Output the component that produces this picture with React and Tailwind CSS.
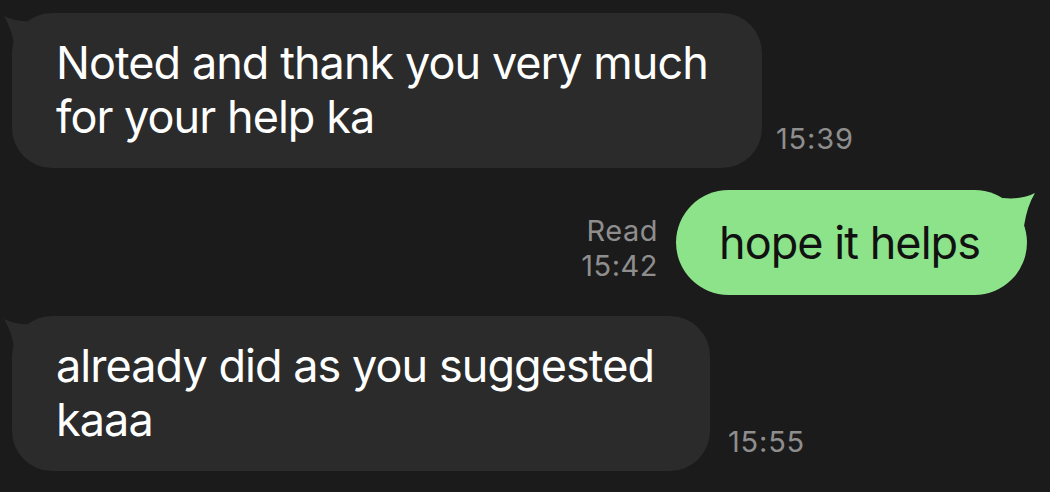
export default function App() {
  const font = { fontFamily: 'Inter, "Noto Sans", sans-serif' };
  const TailLeft = ({ fill }) => (
    <svg className="absolute left-[-10px] top-0" width="40" height="40" viewBox="0 0 40 40">
      <path d="M2 3 Q16 10 34 8 L34 36 L13 36 Q10 16 2 3 Z" fill={fill} />
    </svg>
  );
  const TailRight = ({ fill }) => (
    <svg className="absolute right-[-10px] top-0 -scale-x-100" width="40" height="40" viewBox="0 0 40 40">
      <path d="M2 3 Q16 10 34 8 L34 36 L13 36 Q10 16 2 3 Z" fill={fill} />
    </svg>
  );
  return (
    <div className="w-[1050px] h-[492px] bg-[#1b1b1b] overflow-hidden flex flex-col pt-[13px]" style={font}>
      <div className="flex items-end pl-[12px] gap-[14px]">
        <div className="relative w-[750px] bg-[#2b2b2b] rounded-[40px] pl-[44px] pr-[20px] pt-[23px] pb-[24px]">
          <TailLeft fill="#2b2b2b" />
          <div className="relative whitespace-nowrap text-white text-[45px] leading-[54px] tracking-[-0.95px]">
            Noted and thank you very much<br />for your help ka
          </div>
        </div>
        <div className="mb-[12px] text-[#8e8e8e] text-[29px] leading-[35px] tracking-[0.8px]">15:39</div>
      </div>

      <div className="flex items-end justify-end pr-[23px] mt-[22px] gap-[18px]">
        <div className="mb-[12px] text-[#8e8e8e] text-[29px] leading-[35px] tracking-[0.5px] text-right">
          Read<br />15:42
        </div>
        <div className="relative h-[105px] bg-[#8ce38a] rounded-full pl-[43px] pr-[47px] flex items-center">
          <TailRight fill="#8ce38a" />
          <div className="relative whitespace-nowrap text-[#111111] text-[45px] leading-[54px] tracking-[-0.95px]">hope it helps</div>
        </div>
      </div>

      <div className="flex items-end pl-[12px] gap-[18px] mt-[21px]">
        <div className="relative w-[698px] bg-[#2b2b2b] rounded-[40px] pl-[44px] pr-[20px] pt-[23px] pb-[24px]">
          <TailLeft fill="#2b2b2b" />
          <div className="relative whitespace-nowrap text-white text-[45px] leading-[54px] tracking-[-0.95px]">
            already did as you suggested<br />kaaa
          </div>
        </div>
        <div className="mb-[12px] text-[#8e8e8e] text-[29px] leading-[35px] tracking-[0.8px]">15:55</div>
      </div>
    </div>
  );
}
